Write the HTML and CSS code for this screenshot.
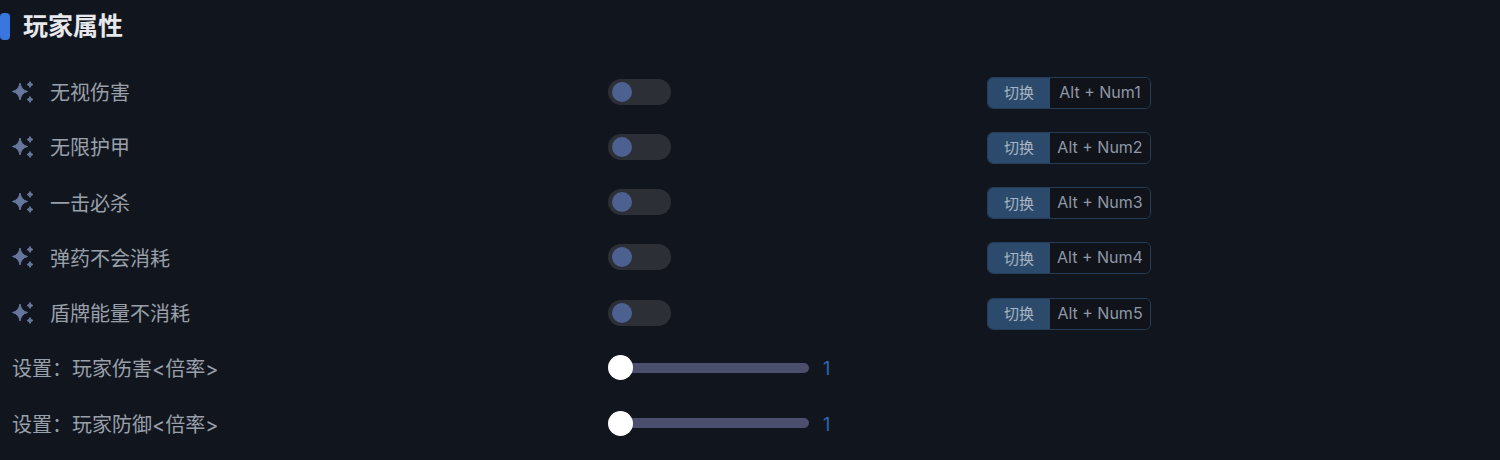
FILE: index.html
```html
<!DOCTYPE html>
<html lang="zh-CN">
<head>
    <meta charset="UTF-8">
    <meta name="viewport" content="width=device-width, initial-scale=1.0">
    <title>玩家属性</title>
    <link rel="stylesheet" href="styles.css">
</head>
<body>

<svg class="sprite" width="0" height="0">
    <symbol id="sparkle" viewBox="0 0 24 24">
        <path d="M8 3Q9.2 10 15.5 11.5Q9.2 13 8 20Q6.8 13 .5 11.5Q6.8 10 8 3Z"/>
        <path d="M18 1.5Q18.6 3.9 21 4.5Q18.6 5.1 18 7.5Q17.4 5.1 15 4.5Q17.4 3.9 18 1.5Z"/>
        <path d="M18 16.5Q18.6 18.9 21 19.5Q18.6 20.1 18 22.5Q17.4 20.1 15 19.5Q17.4 18.9 18 16.5Z"/>
    </symbol>
</svg>

<div id="panel">
    <h2 class="section-title">玩家属性</h2>

    <div class="rows">
        <div class="row">
            <div class="label"><svg class="icon"><use href="#sparkle"/></svg>无视伤害</div>
            <div class="control"><div class="switch"><span class="switch-knob"></span></div></div>
            <div class="hotkey"><span class="hotkey-btn">切换</span><span class="hotkey-keys">Alt + Num1</span></div>
        </div>
        <div class="row">
            <div class="label"><svg class="icon"><use href="#sparkle"/></svg>无限护甲</div>
            <div class="control"><div class="switch"><span class="switch-knob"></span></div></div>
            <div class="hotkey"><span class="hotkey-btn">切换</span><span class="hotkey-keys">Alt + Num2</span></div>
        </div>
        <div class="row">
            <div class="label"><svg class="icon"><use href="#sparkle"/></svg>一击必杀</div>
            <div class="control"><div class="switch"><span class="switch-knob"></span></div></div>
            <div class="hotkey"><span class="hotkey-btn">切换</span><span class="hotkey-keys">Alt + Num3</span></div>
        </div>
        <div class="row">
            <div class="label"><svg class="icon"><use href="#sparkle"/></svg>弹药不会消耗</div>
            <div class="control"><div class="switch"><span class="switch-knob"></span></div></div>
            <div class="hotkey"><span class="hotkey-btn">切换</span><span class="hotkey-keys">Alt + Num4</span></div>
        </div>
        <div class="row">
            <div class="label"><svg class="icon"><use href="#sparkle"/></svg>盾牌能量不消耗</div>
            <div class="control"><div class="switch"><span class="switch-knob"></span></div></div>
            <div class="hotkey"><span class="hotkey-btn">切换</span><span class="hotkey-keys">Alt + Num5</span></div>
        </div>
        <div class="row">
            <div class="label">设置&#xFF1A;玩家伤害&lt;倍率&gt;</div>
            <div class="control slider-wrap">
                <div class="slider"><span class="slider-knob"></span></div>
                <span class="slider-value">1</span>
            </div>
        </div>
        <div class="row">
            <div class="label">设置&#xFF1A;玩家防御&lt;倍率&gt;</div>
            <div class="control slider-wrap">
                <div class="slider"><span class="slider-knob"></span></div>
                <span class="slider-value">1</span>
            </div>
        </div>
    </div>
</div>

</body>
</html>
```

FILE: styles.css
```css
body {
    font-family: 'Inter', 'Noto Sans CJK SC', sans-serif;
    background-color: #11161e;
    margin: 0;
    padding: 0;
    overflow: hidden;
}

.sprite {
    display: block;
}

#panel {
    padding-top: 13px;
}

.section-title {
    display: flex;
    align-items: center;
    gap: 13px;
    margin: 0;
    height: 27px;
    line-height: 27px;
    font-size: 25px;
    font-weight: 700;
    color: #e6e8eb;
}

.section-title::before {
    content: "";
    width: 10px;
    height: 27px;
    border-radius: 4px;
    background-color: #3a76e0;
}

.rows {
    padding-top: 24px;
}

.row {
    display: grid;
    grid-template-columns: 596px 379px auto;
    align-items: center;
    height: 55.25px;
    padding-left: 12px;
}

.label {
    display: flex;
    align-items: center;
    font-size: 20px;
    color: #9aa0aa;
}

.icon {
    width: 24px;
    height: 24px;
    margin-right: 14px;
    fill: #67769d;
    stroke: #67769d;
    stroke-width: 1;
    stroke-linejoin: round;
}

.control {
    display: flex;
    align-items: center;
}

.switch {
    width: 63px;
    height: 26px;
    border-radius: 13px;
    background-color: #2c2f36;
    display: flex;
    align-items: center;
    padding-left: 4px;
    box-sizing: border-box;
}

.switch-knob {
    width: 20px;
    height: 20px;
    border-radius: 50%;
    background-color: #4d6190;
}

.hotkey {
    display: flex;
    width: 164px;
    height: 32px;
    margin-top: 2px;
    box-sizing: border-box;
    border: 1px solid #263d57;
    border-radius: 6px;
    overflow: hidden;
    font-size: 15px;
}

.hotkey-btn {
    width: 62px;
    padding-bottom: 2px;
    box-sizing: border-box;
    background-color: #2c4b6c;
    color: #a9b4c2;
    display: flex;
    align-items: center;
    justify-content: center;
}

.hotkey-keys {
    flex: 1;
    font-size: 16px;
    padding-bottom: 2px;
    background-color: #10131a;
    color: #8f98a6;
    display: flex;
    align-items: center;
    justify-content: center;
}

.slider-wrap {
    height: 26px;
}

.slider {
    width: 189px;
    height: 10px;
    margin-left: 12px;
    border-radius: 5px;
    background-color: #4b4e6d;
    display: flex;
    align-items: center;
}

.slider-knob {
    width: 25px;
    height: 25px;
    margin-left: -12px;
    border-radius: 50%;
    background-color: #fff;
}

.slider-value {
    margin-left: 14px;
    margin-top: 2px;
    font-size: 18px;
    color: #2f66b4;
}
```
